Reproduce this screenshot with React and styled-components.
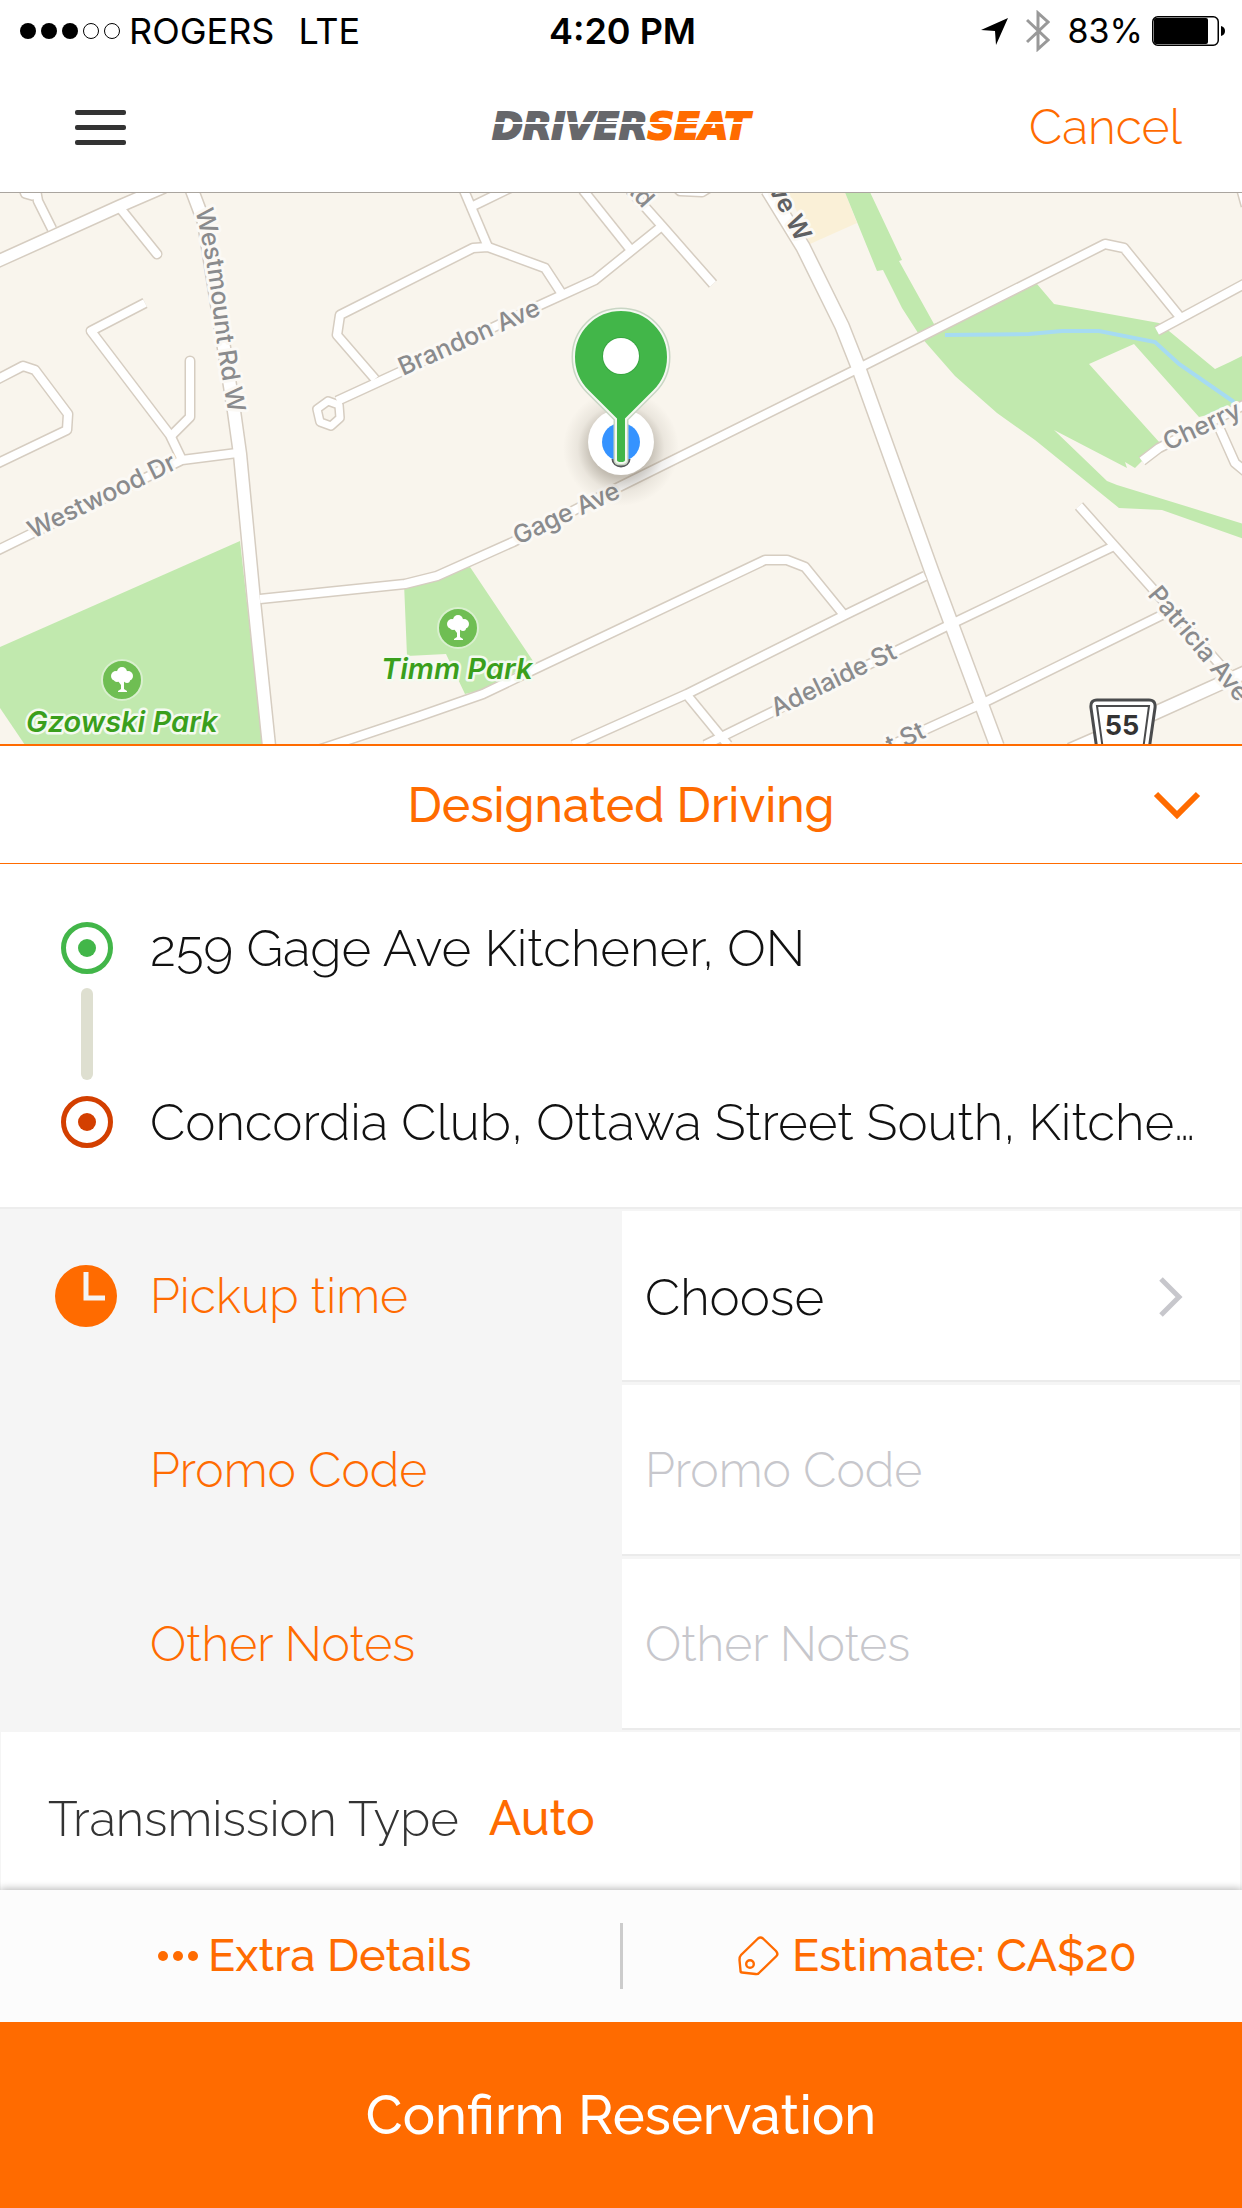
import React from "react";
import styled, { createGlobalStyle } from "styled-components";

const ORANGE = "#ff6b00";
const GREEN = "#42b649";
const UI_FONT = 'Raleway, Lato, "Open Sans", sans-serif';
const SYSTEM_FONT = 'Inter, "Liberation Sans", sans-serif';
const LOGO_FONT = '"DejaVu Sans", sans-serif';

const GlobalStyle = createGlobalStyle`
  * { box-sizing: border-box; }
  body { margin: 0; background: #fff; font-family: ${UI_FONT}; }
  button, input, select {
    margin: 0;
    padding: 0;
    border: 0;
    border-radius: 0;
    background: none;
    font-family: inherit;
    color: inherit;
  }
  svg { display: block; flex: none; }
`;

const Screen = styled.div`
  display: flex;
  flex-direction: column;
  min-height: 100vh;
`;

const StatusBar = styled.div`
  display: grid;
  grid-template-columns: 1fr auto 1fr;
  align-items: center;
  height: 62px;
  padding: 0 16px 0 19px;
  font: 400 36px/40px ${SYSTEM_FONT};
  color: #000;
`;

const StatusGroup = styled.div`
  display: flex;
  align-items: center;
  justify-content: ${(p) => (p.$end ? "flex-end" : "flex-start")};
  gap: ${(p) => p.$gap}px;
`;

const Carrier = styled.span`
  margin-right: 16px;
`;

const BatteryLevel = styled.span`
  font-size: 34px;
`;

const Clock = styled.span`
  font-weight: 600;
`;

const Header = styled.header`
  display: grid;
  grid-template-columns: 1fr auto 1fr;
  align-items: center;
  height: 131px;
  padding: 0 60px;
  border-bottom: 1px solid #aaa59f;
`;

const MenuButton = styled.button`
  display: flex;
  flex-direction: column;
  justify-self: start;
  gap: 10px;
  padding: 0 15px;
`;

const MenuLine = styled.span`
  width: 51px;
  height: 5px;
  border-radius: 2px;
  background: #333;
`;

const Logo = styled.div`
  position: relative;
  font: italic 700 37px/40px ${LOGO_FONT};
  -webkit-text-stroke: 2px currentColor;
  color: #66676b;

  &::after {
    content: "";
    position: absolute;
    left: 0;
    right: -4px;
    top: 15px;
    height: 2px;
    background: #fff;
  }
`;

const LogoAccent = styled.span`
  color: ${ORANGE};
`;

const CancelButton = styled.button`
  justify-self: end;
  font-size: 48px;
  line-height: 60px;
  font-weight: 300;
  color: ${ORANGE};
`;

const MapArea = styled.div`
  flex: 1 1 551px;
  min-height: 320px;
  position: relative;
  overflow: hidden;
  background: #f9f5ed;
`;

const MapCanvas = styled.svg`
  position: absolute;
  inset: 0;
  width: 100%;
  height: 100%;
`;

const ServicePicker = styled.label`
  position: relative;
  display: block;
  border-top: 2px solid ${ORANGE};
  border-bottom: 1px solid ${ORANGE};
  color: ${ORANGE};
`;

const ServiceSelect = styled.select`
  display: block;
  width: 100%;
  height: 117px;
  appearance: none;
  text-align: center;
  text-align-last: center;
  font-size: 48px;
  font-weight: 500;
`;

const ServiceArrow = styled.svg`
  position: absolute;
  right: 41px;
  top: 43px;
  pointer-events: none;
`;

const Route = styled.section`
  display: flex;
  gap: 37px;
  padding: 58px 40px 59px 61px;
  border-bottom: 2px solid #ededed;
`;

const Stops = styled.div`
  flex: 1;
  min-width: 0;
  display: flex;
  flex-direction: column;
  justify-content: space-between;
`;

const Stop = styled.button`
  overflow: hidden;
  text-overflow: ellipsis;
  white-space: nowrap;
  text-align: left;
  font-size: 51px;
  line-height: 72px;
  margin: -10px 0;
  font-weight: 300;
  color: #111;
`;

const Fields = styled.section`
  background: #f5f5f5;
`;

const FieldRow = styled.div`
  display: grid;
  grid-template-columns: 1fr 1fr;
  height: 174px;
`;

const FieldLabel = styled.label`
  display: flex;
  align-items: center;
  gap: 33px;
  padding-left: 55px;
  font-size: 48px;
  font-weight: 300;
  color: ${ORANGE};
`;

const IconSlot = styled.span`
  width: 62px;
`;

const FieldCell = styled.div`
  display: flex;
  margin: 2px 2px 1px 1px;
  border-bottom: 2px solid #ebebeb;
  background: #fff;
`;

const FieldInput = styled.input`
  width: 100%;
  padding: 0 23px;
  outline: none;
  font-size: 48px;
  font-weight: 300;
  color: #111;

  &::placeholder { color: #c7c7cc; opacity: 1; }
`;

const FieldButton = styled.button`
  display: flex;
  flex: 1;
  align-items: center;
  justify-content: space-between;
  padding: 2px 56px 0 23px;
  font-size: 51px;
  font-weight: 300;
  color: #111;
`;

const Transmission = styled.section`
  display: flex;
  align-items: center;
  gap: 30px;
  height: 159px;
  padding: 14px 47px 0;
  border: solid #f5f5f5;
  border-width: 1px 2px 0 1px;
  font-size: 49px;
  font-weight: 300;
  color: #333;
`;

const TransmissionValue = styled.button`
  font-size: 48px;
  font-weight: 500;
  color: ${ORANGE};
`;

const ExtraBar = styled.nav`
  position: relative;
  display: flex;
  align-items: center;
  height: 132px;
  background: #fcfcfc;
  box-shadow: 0 -1px 8px rgba(0, 0, 0, 0.3);
`;

const ExtraButton = styled.button`
  flex: 1;
  display: flex;
  align-items: center;
  justify-content: center;
  gap: ${(p) => p.$gap}px;
  padding-left: 10px;
  font-size: 45px;
  line-height: 60px;
  font-weight: 500;
  color: ${ORANGE};
`;

const Divider = styled.span`
  width: 3px;
  height: 66px;
  background: #ccc;
`;

const ConfirmButton = styled.button`
  position: relative;
  height: 186px;
  font-size: 54px;
  font-weight: 500;
  color: #fff;
  background: ${ORANGE};
`;

const RoadLabel = styled.text`
  font: ${(p) => (p.$strong ? 600 : 500)} 25px ${SYSTEM_FONT};
  fill: ${(p) => (p.$strong ? "#5f6062" : "#8a8b8d")};
  stroke: #fbf9f5;
  stroke-width: 6px;
  stroke-linejoin: round;
  paint-order: stroke;
`;

const ParkLabel = styled.text`
  font: italic 600 29px ${SYSTEM_FONT};
  fill: #3a9f1c;
  stroke: #f4faf0;
  stroke-width: 5px;
  stroke-linejoin: round;
  paint-order: stroke;
`;

const ShieldLabel = styled.text`
  font: 700 27px ${SYSTEM_FONT};
  fill: #333;
`;

const PARKS = [
  "M0 647L240 541L263 745H25L0 708Z",
  "M404 583L470 567L533 661L490 688L465 694L446 654L407 656Z",
  "M844 190H869L902 260L899 261L934 324L1037 284L1054 304L1159 323L1169 331L1215 369L1230 362L1244 355V406L1199 417L1134 344L1089 364L1160 443L1135 468L1125 462L1127 468L1054 430L1107 481L1117 485L1244 524V539L1162 510L1119 508L1035 440L997 413L955 376L920 336L902 308L883 270L877 271Z",
];

const ROADS = [
  { w: 8, d: "M52 229L38 201L36 190" },
  { w: 7, d: "M22 186L25 194L32 196L38 190" },
  { w: 8, d: "M120 208L157 254", cap: "round" },
  { w: 8, d: "M145 303L91 331L170 435L182 460" },
  { w: 8, d: "M190 361V417L172 435", cap: "round" },
  { w: 8, d: "M-4 380L23 366L35 370L68 414L67 430L-4 464" },
  { w: 8, d: "M-4 551L182 460L237 453" },
  { w: 8, d: "M260 599L405 584L437 576L513 542L617 488L859 368L1105 244L1124 248L1180 317" },
  { w: 8, d: "M1157 331L1246 283" },
  { w: 8, d: "M573 745L687 694L845 615L925 576" },
  { w: 8, d: "M687 695L728 745" },
  { w: 8, d: "M705 745L945 627L1112 547" },
  { w: 8, d: "M1079 506L1152 588L1246 694" },
  { w: 8, d: "M885 748L979 705L1162 615" },
  { w: 12, d: "M1070 750L1155 713L1246 672" },
  { w: 8, d: "M318 750L420 716L483 694L533 670L765 560H787L805 567L844 615" },
  { w: 8, d: "M375 379L337 335L340 315L473 248L488 247L545 268L562 294" },
  { w: 8, d: "M337 401L400 372L538 306L595 280L662 226" },
  { w: 7, d: "M328 401L317 409L320 422L331 426L340 418L339 405Z" },
  { w: 8, d: "M463 188L488 247" },
  { w: 8, d: "M473 206L510 188" },
  { w: 8, d: "M583 190L630 249" },
  { w: 8, d: "M630 190L662 226L713 284" },
  { w: 8, d: "M675 186L680 191L702 192L712 186" },
  { w: 8, d: "M1142 461L1159 448L1246 404" },
  { w: 8, d: "M1218 425L1235 463L1246 472" },
  { w: 8, d: "M1241 188L1246 206" },
  { w: 11, d: "M-4 262L120 206L164 187" },
  { w: 12, d: "M190 185L204 222L218 310L234 411L240 454L254 601L269 746" },
  { w: 13, d: "M768 190L803 247L842 326L859 369L932 572L997 746" },
];

const ROAD_LABELS = [
  { text: "Westwood Dr", x: 33, y: 539, angle: -26 },
  { text: "Brandon Ave", x: 403, y: 376, angle: -24 },
  { text: "Gage Ave", x: 518, y: 545, angle: -25 },
  { text: "Adelaide St", x: 776, y: 717, angle: -26 },
  { text: "t St", x: 927, y: 737, angle: -25, anchor: "end" },
  { text: "Cherry", x: 1168, y: 451, angle: -25 },
  { text: "Patricia Ave", x: 1147, y: 595, angle: 50 },
  { text: "Rd", x: 643, y: 209, angle: 48, anchor: "end" },
  { text: "ve W", x: 797, y: 243, angle: 62, anchor: "end", strong: true },
];

function ParkBadge({ x, y }) {
  return (
    <g transform={`translate(${x} ${y})`}>
      <circle r="20" fill="#6fbe53" stroke="#d9f0ce" strokeWidth="2" />
      <g fill="#fff">
        <circle cx="0" cy="-8" r="5" />
        <circle cx="-6" cy="-4" r="5" />
        <circle cx="6" cy="-4" r="5" />
        <circle cx="-5" cy="-1" r="3" />
        <circle cx="5" cy="0" r="3" />
        <path d="M-4 -4H4V1L2 2V9L5 11V12H-4V11L-1 9V5L-4 1Z" />
      </g>
    </g>
  );
}

function StreetMap() {
  return (
    <MapCanvas
      viewBox="0 193 1242 551"
      preserveAspectRatio="xMidYMid slice"
      role="img"
      aria-label="Map of the pickup location"
    >
      <defs>
        <path id="westmount" d="M195 210Q208 262 213 310T229 416" />
        <radialGradient id="halo">
          <stop offset="0.5" stopColor="#5a5040" stopOpacity="0.34" />
          <stop offset="0.75" stopColor="#5a5040" stopOpacity="0.09" />
          <stop offset="1" stopColor="#5a5040" stopOpacity="0" />
        </radialGradient>
      </defs>
      <path d="M788 190H844L857 223L810 244Z" fill="#faf0d7" />
      {PARKS.map((d) => (
        <path key={d} d={d} fill="#c1e9ae" />
      ))}
      <path
        d="M945 335L1029 334L1062 331H1099L1155 342L1179 364L1234 402"
        fill="none"
        stroke="#a6dbf2"
        strokeWidth="4"
      />
      <g fill="none" stroke="#d6cdc1" strokeLinejoin="round">
        {ROADS.map((r) => (
          <path key={r.d} d={r.d} strokeWidth={r.w + 3} strokeLinecap={r.cap} />
        ))}
      </g>
      <g fill="none" stroke="#fff" strokeLinejoin="round">
        {ROADS.map((r) => (
          <path key={r.d} d={r.d} strokeWidth={r.w} strokeLinecap={r.cap} />
        ))}
      </g>
      <RoadLabel>
        <textPath href="#westmount">Westmount Rd W</textPath>
      </RoadLabel>
      {ROAD_LABELS.map((l) => (
        <RoadLabel
          key={l.text}
          $strong={l.strong}
          textAnchor={l.anchor}
          transform={`translate(${l.x} ${l.y}) rotate(${l.angle})`}
        >
          {l.text}
        </RoadLabel>
      ))}
      <ParkBadge x={122} y={680} />
      <ParkBadge x={458} y={628} />
      <ParkLabel x="26" y="732">Gzowski Park</ParkLabel>
      <ParkLabel x="381" y="679">Timm Park</ParkLabel>
      <g fill="#fff" stroke="#4a4b4d">
        <path d="M1097 700H1149Q1156 700 1155 708L1149 750H1097L1091 708Q1090 700 1097 700Z" strokeWidth="3" />
        <path d="M1097 706H1149L1143 750H1103Z" strokeWidth="2" />
      </g>
      <ShieldLabel x="1122" y="735" textAnchor="middle">55</ShieldLabel>
      <circle cx="621" cy="448" r="58" fill="url(#halo)" />
      <circle cx="621" cy="442" r="33" fill="#fff" />
      <circle cx="621" cy="442" r="19" fill="#3593ff" />
      <path d="M613 459A8 7 0 0 0 629 459" fill="none" stroke="#55565a" strokeWidth="3" />
      <path
        d="M621 310C595 310 574 331 574 357C574 372 580 383 588 391L616 419V460Q616 463 621 463T626 460V419L654 391C662 383 668 372 668 357C668 331 647 310 621 310Z"
        fill={GREEN}
        stroke="#c9d6c4"
        strokeWidth="5"
      />
      <path
        d="M621 310C595 310 574 331 574 357C574 372 580 383 588 391L616 419V460Q616 463 621 463T626 460V419L654 391C662 383 668 372 668 357C668 331 647 310 621 310Z"
        fill={GREEN}
        stroke="#f4f8f1"
        strokeWidth="2"
      />
      <circle cx="621" cy="356" r="19" fill="#38a440" />
      <circle cx="621" cy="356" r="18" fill="#fff" />
    </MapCanvas>
  );
}

function SignalDots() {
  return (
    <svg width="102" height="18" viewBox="0 0 102 18" aria-hidden="true">
      {[0, 1, 2, 3, 4].map((i) => (
        <circle
          key={i}
          cx={9 + i * 21}
          cy="9"
          r={i < 3 ? 8 : 7.5}
          fill={i < 3 ? "#000" : "none"}
          stroke={i < 3 ? "none" : "#000"}
        />
      ))}
    </svg>
  );
}

function StatusIcons() {
  return (
    <>
      <svg width="27" height="27" viewBox="0 0 27 27" aria-hidden="true">
        <path d="M27 0L15 27L14 13L0 12Z" fill="#000" />
      </svg>
      <svg width="24" height="42" viewBox="0 0 24 42" aria-hidden="true">
        <path d="M1 10L22 30L12 39V3L22 12L1 32" fill="none" stroke="#999" strokeWidth="3" />
      </svg>
    </>
  );
}

function Battery() {
  return (
    <svg width="74" height="30" viewBox="0 0 74 30" aria-hidden="true">
      <rect x="0.75" y="0.75" width="65.5" height="28.5" rx="5" fill="none" stroke="#000" strokeWidth="1.5" />
      <rect x="2" y="2" width="54" height="26" rx="2" fill="#000" />
      <path d="M69 10Q73 11 73 15T69 20Z" fill="#000" />
    </svg>
  );
}

function RouteMarkers() {
  return (
    <svg width="52" height="226" viewBox="0 0 52 226" aria-hidden="true">
      <circle cx="26" cy="26" r="23.5" fill="none" stroke={GREEN} strokeWidth="5" />
      <circle cx="26" cy="26" r="9" fill={GREEN} />
      <rect x="20" y="66" width="12" height="92" rx="6" fill="#dedfd0" />
      <circle cx="26" cy="200" r="23.5" fill="none" stroke="#d33f00" strokeWidth="5" />
      <circle cx="26" cy="200" r="9" fill="#d33f00" />
    </svg>
  );
}

function ClockIcon() {
  return (
    <svg width="62" height="62" viewBox="0 0 62 62" aria-hidden="true">
      <circle cx="31" cy="31" r="31" fill={ORANGE} />
      <path d="M31 7V33H50" fill="none" stroke="#f4f4f4" strokeWidth="5" />
    </svg>
  );
}

export default function App() {
  return (
    <Screen>
      <GlobalStyle />
      <StatusBar>
        <StatusGroup $gap={8}>
          <SignalDots />
          <Carrier>ROGERS</Carrier>
          <span>LTE</span>
        </StatusGroup>
        <Clock>4:20 PM</Clock>
        <StatusGroup $end $gap={18}>
          <StatusIcons />
          <StatusGroup $gap={9}>
            <BatteryLevel>83%</BatteryLevel>
            <Battery />
          </StatusGroup>
        </StatusGroup>
      </StatusBar>
      <Header>
        <MenuButton type="button" aria-label="Menu">
          <MenuLine />
          <MenuLine />
          <MenuLine />
        </MenuButton>
        <Logo>
          DRIVER<LogoAccent>SEAT</LogoAccent>
        </Logo>
        <CancelButton type="button">Cancel</CancelButton>
      </Header>
      <MapArea>
        <StreetMap />
      </MapArea>
      <ServicePicker>
        <ServiceSelect aria-label="Service" defaultValue="designated">
          <option value="designated">Designated Driving</option>
        </ServiceSelect>
        <ServiceArrow width="48" height="34" viewBox="0 0 48 34" aria-hidden="true">
          <path d="M3 5L24 26L45 5" fill="none" stroke={ORANGE} strokeWidth="6" />
        </ServiceArrow>
      </ServicePicker>
      <Route>
        <RouteMarkers />
        <Stops>
          <Stop type="button">259 Gage Ave Kitchener, ON</Stop>
          <Stop type="button">Concordia Club, Ottawa Street South, Kitche…</Stop>
        </Stops>
      </Route>
      <Fields>
        <FieldRow>
          <FieldLabel htmlFor="pickup">
            <IconSlot>
              <ClockIcon />
            </IconSlot>
            Pickup time
          </FieldLabel>
          <FieldCell>
            <FieldButton id="pickup" type="button">
              Choose
              <svg width="26" height="40" viewBox="0 0 26 40" aria-hidden="true">
                <path d="M3 2L21 20L3 38" fill="none" stroke="#c7c7cc" strokeWidth="5" />
              </svg>
            </FieldButton>
          </FieldCell>
        </FieldRow>
        <FieldRow>
          <FieldLabel htmlFor="promo">
            <IconSlot />
            Promo Code
          </FieldLabel>
          <FieldCell>
            <FieldInput id="promo" type="text" placeholder="Promo Code" />
          </FieldCell>
        </FieldRow>
        <FieldRow>
          <FieldLabel htmlFor="notes">
            <IconSlot />
            Other Notes
          </FieldLabel>
          <FieldCell>
            <FieldInput id="notes" type="text" placeholder="Other Notes" />
          </FieldCell>
        </FieldRow>
      </Fields>
      <Transmission>
        <span>Transmission Type</span>
        <TransmissionValue type="button">Auto</TransmissionValue>
      </Transmission>
      <ExtraBar>
        <ExtraButton type="button" $gap={10}>
          <svg width="40" height="12" viewBox="0 0 40 12" aria-hidden="true">
            {[5, 20, 35].map((cx) => (
              <circle key={cx} cx={cx} cy="6" r="5" fill={ORANGE} />
            ))}
          </svg>
          Extra Details
        </ExtraButton>
        <Divider />
        <ExtraButton type="button" $gap={13}>
          <svg width="41" height="40" viewBox="0 0 41 40" aria-hidden="true">
            <g fill="none" stroke={ORANGE} strokeWidth="2.4" strokeLinejoin="round">
              <path d="M20 2.5Q22.5 0.5 25 2.5L38 15Q40.5 18 38.5 20L22 36Q20.5 38.5 17.5 38L4 36.5Q2.5 36.5 2.5 34.5L1.5 24Q1.5 20.5 3 19Z" />
              <circle cx="12" cy="28" r="3.8" />
            </g>
          </svg>
          Estimate: CA$20
        </ExtraButton>
      </ExtraBar>
      <ConfirmButton type="button">Confirm Reservation</ConfirmButton>
    </Screen>
  );
}
